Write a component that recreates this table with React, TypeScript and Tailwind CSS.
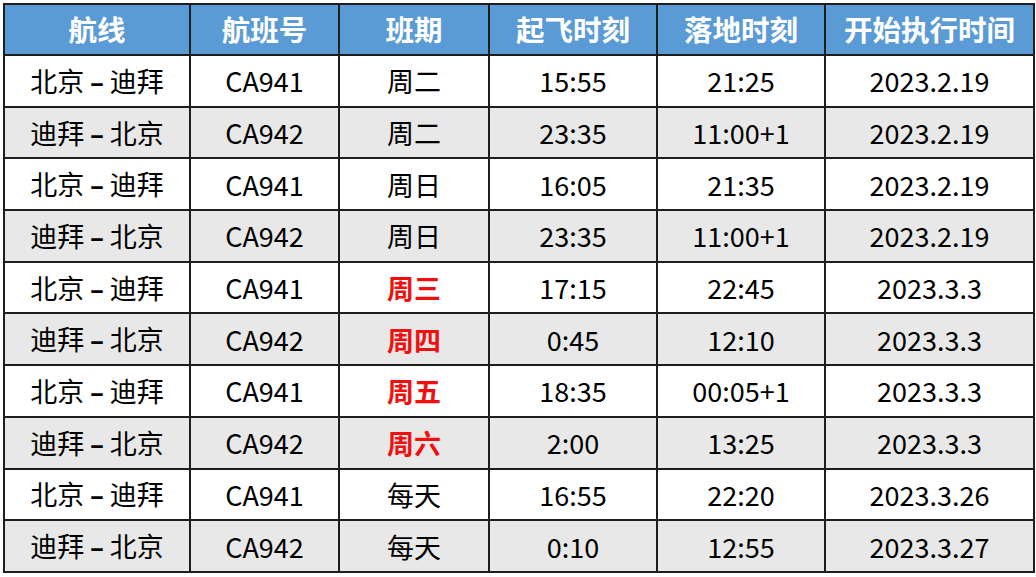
import React from "react";

const rows: [string, string, string, string, string, string, boolean][] = [
  ["北京-迪拜", "CA941", "周二", "15:55", "21:25", "2023.2.19", false],
  ["迪拜-北京", "CA942", "周二", "23:35", "11:00+1", "2023.2.19", false],
  ["北京-迪拜", "CA941", "周日", "16:05", "21:35", "2023.2.19", false],
  ["迪拜-北京", "CA942", "周日", "23:35", "11:00+1", "2023.2.19", false],
  ["北京-迪拜", "CA941", "周三", "17:15", "22:45", "2023.3.3", true],
  ["迪拜-北京", "CA942", "周四", "0:45", "12:10", "2023.3.3", true],
  ["北京-迪拜", "CA941", "周五", "18:35", "00:05+1", "2023.3.3", true],
  ["迪拜-北京", "CA942", "周六", "2:00", "13:25", "2023.3.3", true],
  ["北京-迪拜", "CA941", "每天", "16:55", "22:20", "2023.3.26", false],
  ["迪拜-北京", "CA942", "每天", "0:10", "12:55", "2023.3.27", false],
];

const headers = ["航线", "航班号", "班期", "起飞时刻", "落地时刻", "开始执行时间"];

function Route({ text }: { text: string }) {
  const [a, b] = text.split("-");
  return (
    <span>
      {a}
      <span
        className="inline-block mx-[6px] font-semibold"
        style={{ fontFamily: '"Noto Sans", sans-serif' }}
      >
        –
      </span>
      {b}
    </span>
  );
}

export default function App() {
  return (
    <div
      className="w-[1036px] h-[577px] bg-white pt-[3px] pl-[3px]"
      style={{ fontFamily: '"Noto Sans CJK SC", "Noto Sans", sans-serif' }}
    >
      <table className="border-collapse table-fixed w-[1030px] border-2 border-[#1e1e1e]">
        <colgroup>
          <col className="w-[186px]" />
          <col className="w-[149px]" />
          <col className="w-[150px]" />
          <col className="w-[168px]" />
          <col className="w-[168px]" />
          <col className="w-[209px]" />
        </colgroup>
        <thead>
          <tr className="h-[51px] bg-[#5b9bd5]">
            {headers.map((h) => (
              <th
                key={h}
                className="border-2 border-[#1e1e1e] text-white font-bold text-[28.5px] leading-none text-center p-0"
              >
                {h}
              </th>
            ))}
          </tr>
        </thead>
        <tbody>
          {rows.map((r, i) => (
            <tr key={i} className={`h-[51.7px] ${i % 2 === 1 ? "bg-[#e8e8e8]" : "bg-white"}`}>
              {r.slice(0, 6).map((c, j) => (
                <td
                  key={j}
                  className={`border-2 border-[#1e1e1e] text-center text-[27px] leading-none p-0 ${
                    j === 2 && r[6] ? "text-[#f01010] font-bold" : "text-black"
                  }`}
                >
                  {j === 0 ? <Route text={c as string} /> : (c as string)}
                </td>
              ))}
            </tr>
          ))}
        </tbody>
      </table>
    </div>
  );
}
